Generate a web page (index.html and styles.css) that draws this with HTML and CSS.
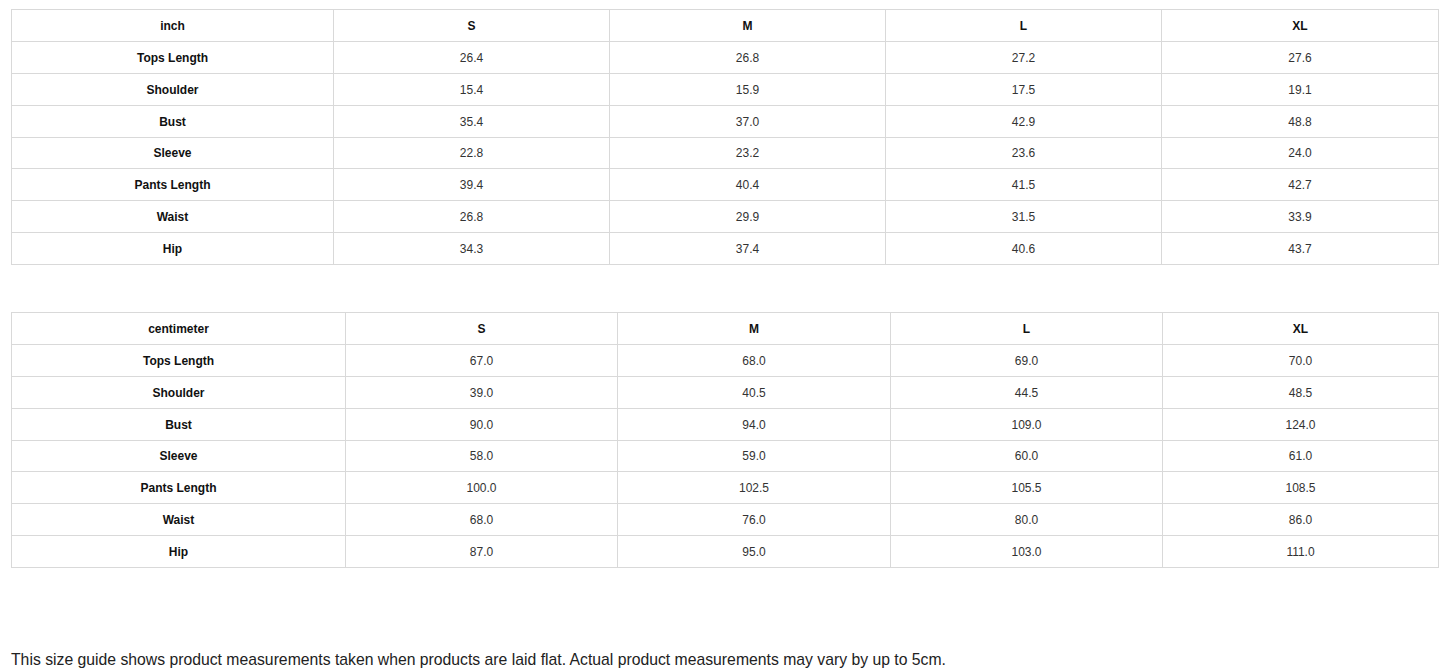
FILE: index.html
```html
<!DOCTYPE html>
<html>
<head>
<meta charset="utf-8">
<link rel="stylesheet" href="styles.css">
</head>
<body>
<div class="page">
  <table class="size-table t-inch">
    <colgroup><col class="c1"><col class="c2"><col class="c3"><col class="c4"><col class="c5"></colgroup>
    <tr class="head"><td>inch</td><td>S</td><td>M</td><td>L</td><td>XL</td></tr>
    <tr><td class="lbl">Tops Length</td><td>26.4</td><td>26.8</td><td>27.2</td><td>27.6</td></tr>
    <tr><td class="lbl">Shoulder</td><td>15.4</td><td>15.9</td><td>17.5</td><td>19.1</td></tr>
    <tr><td class="lbl">Bust</td><td>35.4</td><td>37.0</td><td>42.9</td><td>48.8</td></tr>
    <tr><td class="lbl">Sleeve</td><td>22.8</td><td>23.2</td><td>23.6</td><td>24.0</td></tr>
    <tr><td class="lbl">Pants Length</td><td>39.4</td><td>40.4</td><td>41.5</td><td>42.7</td></tr>
    <tr><td class="lbl">Waist</td><td>26.8</td><td>29.9</td><td>31.5</td><td>33.9</td></tr>
    <tr><td class="lbl">Hip</td><td>34.3</td><td>37.4</td><td>40.6</td><td>43.7</td></tr>
  </table>
  <table class="size-table t-cm">
    <colgroup><col class="c1"><col class="c2"><col class="c3"><col class="c4"><col class="c5"></colgroup>
    <tr class="head"><td>centimeter</td><td>S</td><td>M</td><td>L</td><td>XL</td></tr>
    <tr><td class="lbl">Tops Length</td><td>67.0</td><td>68.0</td><td>69.0</td><td>70.0</td></tr>
    <tr><td class="lbl">Shoulder</td><td>39.0</td><td>40.5</td><td>44.5</td><td>48.5</td></tr>
    <tr><td class="lbl">Bust</td><td>90.0</td><td>94.0</td><td>109.0</td><td>124.0</td></tr>
    <tr><td class="lbl">Sleeve</td><td>58.0</td><td>59.0</td><td>60.0</td><td>61.0</td></tr>
    <tr><td class="lbl">Pants Length</td><td>100.0</td><td>102.5</td><td>105.5</td><td>108.5</td></tr>
    <tr><td class="lbl">Waist</td><td>68.0</td><td>76.0</td><td>80.0</td><td>86.0</td></tr>
    <tr><td class="lbl">Hip</td><td>87.0</td><td>95.0</td><td>103.0</td><td>111.0</td></tr>
  </table>
  <p class="note">This size guide shows product measurements taken when products are laid flat. Actual product measurements may vary by up to 5cm.</p>
</div>
</body>
</html>
```
FILE: styles.css
```css
html, body {
  margin: 0;
  padding: 0;
  background: #fff;
}
.page {
  padding: 9px 0 0 11px;
  font-family: "Liberation Sans", Arial, sans-serif;
}
.size-table {
  width: 1428px;
  border-collapse: collapse;
  table-layout: fixed;
  font-size: 12px;
  color: #333;
}
.size-table td {
  border: 1px solid #d9d9d9;
  height: 29.875px;
  padding: 1px 0 0 0;
  text-align: center;
  vertical-align: middle;
}
.t-inch .c1 { width: 322px; }
.t-inch .c2 { width: 276px; }
.t-inch .c3 { width: 276px; }
.t-inch .c4 { width: 276px; }
.t-cm .c1 { width: 334px; }
.t-cm .c2 { width: 272px; }
.t-cm .c3 { width: 273px; }
.t-cm .c4 { width: 272px; }
.t-cm { margin-top: 47px; }
.head td, td.lbl {
  font-weight: bold;
  color: #111;
}
.note {
  margin: 83px 0 0 0;
  font-size: 15.75px;
  line-height: 18px;
  color: #222;
}
```
